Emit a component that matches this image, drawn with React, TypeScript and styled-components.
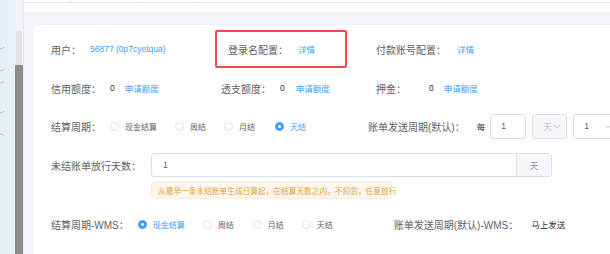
import React from 'react';
import styled, { createGlobalStyle } from 'styled-components';

const GlobalStyle = createGlobalStyle`
    html, body {
        margin: 0;
        padding: 0;
        background: #ffffff;
    }
    body {
        font-family: 'Liberation Sans', 'Noto Sans CJK SC', sans-serif;
        color: #606266;
    }
`;

const Page = styled.div`
    display: flex;
    flex-direction: row;
    width: 610px;
    height: 254px;
    overflow: hidden;
`;

const Sidebar = styled.div`
    display: flex;
    flex-direction: row;
    width: 24px;
    flex-shrink: 0;
    background: #e9eff9;
`;

const MenuMarks = styled.div`
    position: relative;
    width: 16px;
`;

const Mark = styled.svg`
    position: absolute;
    left: 0;
`;

const ScrollTrack = styled.div`
    display: flex;
    flex-direction: column;
    width: 8px;
    padding-top: 31px;
    background: #f1f3f7;
    border-right: 1px solid #e2e6ee;
`;

const ScrollTop = styled.div`
    height: 34px;
    margin: 0 1px;
    border-radius: 4px 4px 0 0;
    background: #e3e3e3;
`;

const ScrollThumb = styled.div`
    flex: 1;
    background: #8b8b8b;
`;

const Main = styled.div`
    flex: 1;
    display: flex;
    flex-direction: column;
    background: #f3f5fa;
    overflow: hidden;
`;

const TopStrip = styled.div`
    height: 12px;
    background: #ffffff;
    flex-shrink: 0;
`;

const TableEdge = styled.div`
    display: flex;
    height: 2px;
    border-bottom: 1px solid #e6e8eb;
`;

const EdgeCell = styled.div<{ $w: number }>`
    width: ${p => p.$w}px;
    border-right: 1px solid #e6e8eb;
`;

const Content = styled.div`
    padding: 13px 0 0 9px;
`;

const Card = styled.div`
    width: 640px;
    height: 240px;
    background: #ffffff;
    border-radius: 5px 0 0 0;
    padding: 5px 0 0 18px;
    box-sizing: border-box;
    box-shadow: 0 0 3px rgba(0, 0, 0, 0.04);
`;

const Row = styled.div<{ $top: number; $h: number }>`
    display: flex;
    align-items: center;
    margin-top: ${p => p.$top}px;
    height: ${p => p.$h}px;
`;

const Item = styled.div<{ $w?: number; $ml?: number }>`
    display: flex;
    align-items: center;
    flex-shrink: 0;
    width: ${p => (p.$w ? `${p.$w}px` : 'auto')};
    margin-left: ${p => p.$ml || 0}px;
`;

const HighlightBox = styled(Item)`
    box-sizing: border-box;
    height: 38px;
    width: 132px;
    padding-left: 11px;
    border: 2px solid #f04a4a;
    border-radius: 2px;
`;

const Label = styled.span<{ $mr?: number }>`
    font-size: 10px;
    color: #606266;
    white-space: nowrap;
    margin-right: ${p => p.$mr || 0}px;
`;

const Value = styled.span<{ $mr?: number }>`
    font-size: 8.5px;
    color: #303133;
    white-space: nowrap;
    margin-right: ${p => p.$mr || 0}px;
`;

const Link = styled.a`
    font-size: 8.5px;
    color: #409eff;
    white-space: nowrap;
    text-decoration: none;
    cursor: pointer;
`;

const RadioGroup = styled.div`
    display: flex;
    align-items: center;
`;

const RadioItem = styled.label<{ $mr: number }>`
    display: flex;
    align-items: center;
    margin-right: ${p => p.$mr}px;
`;

const RadioCircle = styled.span<{ $checked?: boolean }>`
    position: relative;
    box-sizing: border-box;
    width: 9px;
    height: 9px;
    border-radius: 50%;
    border: 1px solid ${p => (p.$checked ? '#409eff' : '#dcdfe6')};
    background: ${p => (p.$checked ? '#409eff' : '#ffffff')};
    margin-right: 6px;
    &::after {
        content: '';
        display: ${p => (p.$checked ? 'block' : 'none')};
        position: absolute;
        left: 50%;
        top: 50%;
        width: 3px;
        height: 3px;
        margin: -1.5px 0 0 -1.5px;
        border-radius: 50%;
        background: #ffffff;
    }
`;

const RadioText = styled.span<{ $checked?: boolean }>`
    font-size: 8px;
    color: ${p => (p.$checked ? '#409eff' : '#606266')};
    white-space: nowrap;
`;

const SmallInput = styled.div<{ $w: number; $disabled?: boolean }>`
    display: flex;
    align-items: center;
    justify-content: space-between;
    box-sizing: border-box;
    width: ${p => p.$w}px;
    height: 25px;
    padding: 0 5px 0 10px;
    margin-right: 6px;
    border: 1px solid #dcdfe6;
    border-radius: 3px;
    background: ${p => (p.$disabled ? '#f5f7fa' : '#ffffff')};
    color: ${p => (p.$disabled ? '#c0c4cc' : '#606266')};
    font-size: 8.5px;
    flex-shrink: 0;
`;

const InputGroup = styled.div`
    display: flex;
    box-sizing: border-box;
    width: 401px;
    height: 24px;
    border: 1px solid #dcdfe6;
    border-radius: 3px;
    overflow: hidden;
`;

const InputField = styled.div`
    flex: 1;
    display: flex;
    align-items: center;
    padding-left: 11px;
    font-size: 8.5px;
    color: #606266;
`;

const Append = styled.div`
    width: 34px;
    display: flex;
    align-items: center;
    justify-content: center;
    background: #f5f7fa;
    border-left: 1px solid #dcdfe6;
    font-size: 8.5px;
    color: #909399;
`;

const Hint = styled.div`
    box-sizing: border-box;
    margin: 4px 0 0 100px;
    width: 241px;
    height: 18px;
    display: flex;
    align-items: center;
    padding-left: 6px;
    background: #fdf6ec;
    border: 1px solid #faecd8;
    border-radius: 3px;
    color: #e6a23c;
    font-size: 7.7px;
    white-space: nowrap;
`;

const Divider = styled.div`
    margin-top: 27px;
    height: 1px;
    background: #eceef3;
`;

const Chevron = () => (
    <svg width="8" height="5" viewBox="0 0 8 5">
        <path d="M1 1l3 3 3-3" fill="none" stroke="#c0c4cc" strokeWidth="0.9" />
    </svg>
);

interface RadioOption {
    text: string;
    checked?: boolean;
    mr: number;
}

const Radios = ({ options }: { options: RadioOption[] }) => (
    <RadioGroup>
        {options.map(o => (
            <RadioItem key={o.text} $mr={o.mr}>
                <RadioCircle $checked={o.checked} />
                <RadioText $checked={o.checked}>{o.text}</RadioText>
            </RadioItem>
        ))}
    </RadioGroup>
);

const markTops = [46, 68, 80, 110];

export default function App() {
    return (
        <Page>
            <GlobalStyle />
            <Sidebar>
                <MenuMarks>
                    {markTops.map(t => (
                        <Mark key={t} width="5" height="5" viewBox="0 0 5 5" style={{ top: t }}>
                            <path d="M-1 1l2.5 2.5L4 1" fill="none" stroke="#a9b1bf" strokeWidth="0.8" />
                        </Mark>
                    ))}
                    <Mark width="5" height="5" viewBox="0 0 5 5" style={{ top: 132 }}>
                        <path d="M-1 4l2.5-2.5L4 4" fill="none" stroke="#a9b1bf" strokeWidth="0.8" />
                    </Mark>
                </MenuMarks>
                <ScrollTrack>
                    <ScrollTop />
                    <ScrollThumb />
                </ScrollTrack>
            </Sidebar>
            <Main>
                <TopStrip>
                    <TableEdge>
                        <EdgeCell $w={47} />
                        <EdgeCell $w={68} />
                        <EdgeCell $w={54} />
                    </TableEdge>
                </TopStrip>
                <Content>
                    <Card>
                        <Row $top={0} $h={38}>
                            <Item $w={164}>
                                <Label $mr={9}>用户：</Label>
                                <Link>56877 (0p7cyetqua)</Link>
                            </Item>
                            <HighlightBox>
                                <Label $mr={10}>登录名配置：</Label>
                                <Link>详情</Link>
                            </HighlightBox>
                            <Item $ml={29}>
                                <Label $mr={11}>付款账号配置：</Label>
                                <Link>详情</Link>
                            </Item>
                        </Row>
                        <Row $top={8} $h={24}>
                            <Item $w={170}>
                                <Label $mr={9}>信用额度：</Label>
                                <Value $mr={10}>0</Value>
                                <Link>申请额度</Link>
                            </Item>
                            <Item $w={155}>
                                <Label $mr={9}>透支额度：</Label>
                                <Value $mr={11}>0</Value>
                                <Link>申请额度</Link>
                            </Item>
                            <Item>
                                <Label $mr={23}>押金：</Label>
                                <Value $mr={10}>0</Value>
                                <Link>申请额度</Link>
                            </Item>
                        </Row>
                        <Row $top={13} $h={26}>
                            <Item>
                                <Label $mr={9}>结算周期：</Label>
                                <Radios
                                    options={[
                                        { text: '现金结算', mr: 18 },
                                        { text: '周结', mr: 18 },
                                        { text: '月结', mr: 20 },
                                        { text: '天结', checked: true, mr: 0 },
                                    ]}
                                />
                            </Item>
                            <Item $ml={62}>
                                <Label $mr={12}>账单发送周期(默认)：</Label>
                                <Value $mr={5}>每</Value>
                                <SmallInput $w={36}>1</SmallInput>
                                <SmallInput $w={35} $disabled>
                                    天
                                    <Chevron />
                                </SmallInput>
                                <SmallInput $w={45}>
                                    1
                                    <Chevron />
                                </SmallInput>
                            </Item>
                        </Row>
                        <Row $top={14} $h={24}>
                            <Label $mr={10}>未结账单放行天数：</Label>
                            <InputGroup>
                                <InputField>1</InputField>
                                <Append>天</Append>
                            </InputGroup>
                        </Row>
                        <Hint>从最早一条未结账单生成日算起，在结算天数之内，不扣货，任意放行</Hint>
                        <Row $top={13} $h={24}>
                            <Item>
                                <Label $mr={9}>结算周期-WMS：</Label>
                                <Radios
                                    options={[
                                        { text: '现金结算', checked: true, mr: 18 },
                                        { text: '周结', mr: 19 },
                                        { text: '月结', mr: 18 },
                                        { text: '天结', mr: 0 },
                                    ]}
                                />
                            </Item>
                            <Item $ml={61}>
                                <Label $mr={13}>账单发送周期(默认)-WMS：</Label>
                                <Value>马上发送</Value>
                            </Item>
                        </Row>
                        <Divider />
                    </Card>
                </Content>
            </Main>
        </Page>
    );
}
